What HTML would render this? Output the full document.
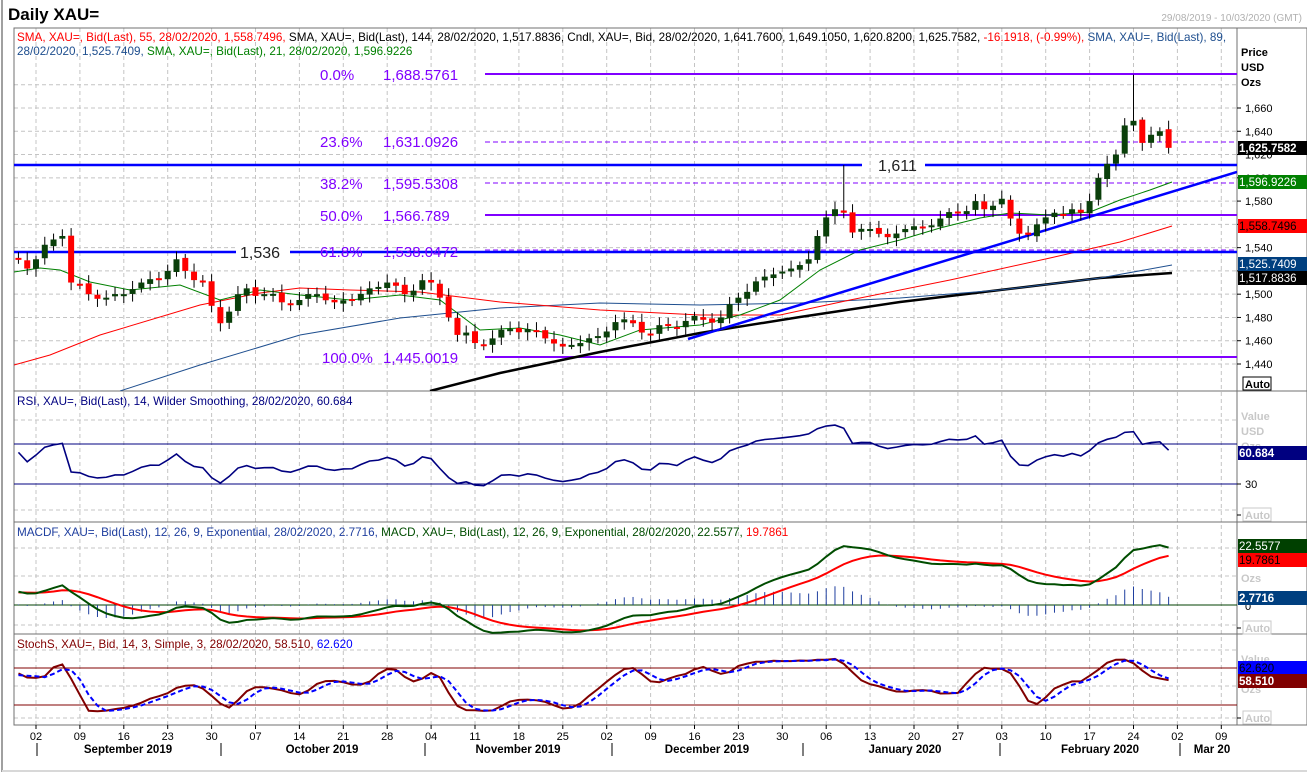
<!DOCTYPE html>
<html><head><meta charset="utf-8"><style>
html,body{margin:0;padding:0;background:#fff;width:1307px;height:775px;overflow:hidden}
svg{display:block;font-family:"Liberation Sans",Arial,sans-serif}
</style></head><body>
<svg id="s" width="1307" height="775" xmlns="http://www.w3.org/2000/svg">
<rect x="0" y="0" width="1307" height="775" fill="#fff"/>
<line x1="2" y1="0" x2="2" y2="772" stroke="#a0a0a0" stroke-width="2"/>
<line x1="2" y1="771" x2="1307" y2="771" stroke="#d8d8d8" stroke-width="2"/>
<text x="8" y="20" font-size="17" font-weight="bold" fill="#000">Daily XAU=</text>
<text x="1302" y="21" font-size="10" fill="#b0b0b0" text-anchor="end">29/08/2019 - 10/03/2020 (GMT)</text>
<g id="grid"></g>
<g id="plots"></g>
<g id="over"></g>
</svg>
<script>
const NS="http://www.w3.org/2000/svg";
const grid=document.getElementById('grid'),plots=document.getElementById('plots'),over=document.getElementById('over');
function el(p,t,a,txt){const e=document.createElementNS(NS,t);for(const k in a)e.setAttribute(k,a[k]);if(txt!=null)e.textContent=txt;p.appendChild(e);return e;}
const L=14,R=1237;
const panels=[[28,391],[391,522],[522,634],[634,725]];
const defs=el(document.getElementById('s'),'defs',{});
panels.forEach((p,i)=>{const c=el(defs,'clipPath',{id:'c'+i});el(c,'rect',{x:L,y:p[0],width:R-L,height:p[1]-p[0]});});
const wx=i=>36+43.9*i;
for(let i=0;i<28;i++){el(grid,'line',{x1:wx(i),y1:28,x2:wx(i),y2:725,stroke:'#c4c4c4','stroke-dasharray':'4,3'});}
const py=p=>108+(1660-p)*1.1636;
for(let p=1440;p<=1680;p+=20){el(grid,'line',{x1:L,y1:py(p),x2:R,y2:py(p),stroke:'#c4c4c4','stroke-dasharray':'4,3'});}
[420,444,484,510, 548,576,625, 650,686,718].forEach(y=>el(grid,'line',{x1:L,y1:y,x2:R,y2:y,stroke:'#c4c4c4','stroke-dasharray':'4,3'}));
el(grid,'rect',{x:L,y:28,width:1307-L,height:697,fill:'none',stroke:'#707070'});
[391,522,634].forEach(y=>el(grid,'line',{x1:L,y1:y,x2:1307,y2:y,stroke:'#707070'}));
el(grid,'line',{x1:R,y1:28,x2:R,y2:725,stroke:'#707070'});

const kp=[[-40,1500],[-20,1515],[-3,1530],[-2,1530],[-1,1522],[0,1530],[2,1547],[3,1550],[4,1510],[6,1500],[8,1497],[10,1500],[12,1510],[15,1520],[16,1530],[17,1520],[19,1510],[20,1490],[21,1475],[22,1485],[23,1500],[24,1505],[26,1500],[28,1493],[30,1495],[32,1500],[34,1493],[36,1495],[38,1505],[40,1510],[42,1500],[44,1512],[45,1510],[46,1497],[47,1480],[48,1465],[49,1467],[50,1458],[52,1462],[54,1470],[56,1470],[58,1462],[60,1455],[62,1458],[64,1464],[66,1476],[68,1475],[70,1466],[72,1473],[74,1477],[76,1478],[78,1480],[80,1497],[82,1511],[84,1517],[86,1522],[88,1530],[89,1550],[90,1566],[91,1573],[92,1570],[93,1553],[95,1556],[97,1549],[99,1556],[101,1558],[103,1565],[105,1570],[107,1580],[108,1573],[109,1576],[110,1582],[111,1565],[112,1552],[113,1551],[114,1560],[115,1566],[116,1570],[117,1568],[118,1573],[119,1570],[120,1580],[121,1600],[122,1612],[123,1620],[124,1645],[125,1649],[126,1630],[127,1637],[128,1640],[129,1625.76]];
const kpm={};kp.forEach(k=>kpm[k[0]]=k[1]);
function interp(d){for(let i=0;i<kp.length-1;i++){if(d>=kp[i][0]&&d<=kp[i+1][0]){const t=(d-kp[i][0])/(kp[i+1][0]-kp[i][0]);return kp[i][1]+t*(kp[i+1][1]-kp[i][1]);}}return kp[kp.length-1][1];}
const D=[];let prev=1498;
for(let d=-40;d<=129;d++){
 let c=(d in kpm)?kpm[d]:interp(d)+4*Math.sin(d*1.7);
 let o=prev+1.2*Math.sin(d*2.3);
 let h=Math.max(o,c)+3+4*Math.abs(Math.sin(d*1.3)),l=Math.min(o,c)-3-4*Math.abs(Math.cos(d*0.9));
 if(d==92)h=1611; if(d==125){o=1645;h=1688.6;l=1640;} if(d==126){o=1650;h=1652;} if(d==129){o=1641.76;h=1649.1;l=1620.8;}
 D.push({d,o,h,l,c});prev=c;
}
const xd=d=>36+8.78*d;
const g0=el(plots,'g',{'clip-path':'url(#c0)'});
const pur='#8000ff';
el(g0,'line',{x1:485,y1:74,x2:R,y2:74,stroke:pur,'stroke-width':2});
el(g0,'line',{x1:485,y1:142,x2:R,y2:142,stroke:pur,'stroke-dasharray':'5,3'});
el(g0,'line',{x1:485,y1:183,x2:R,y2:183,stroke:pur,'stroke-dasharray':'5,3'});
el(g0,'line',{x1:485,y1:215,x2:R,y2:215,stroke:pur,'stroke-width':2});
el(g0,'line',{x1:485,y1:250,x2:R,y2:250,stroke:pur,'stroke-dasharray':'5,3'});
el(g0,'line',{x1:485,y1:357,x2:R,y2:357,stroke:pur,'stroke-width':2});
function pl(g,pts,col,w,extra){const a={points:pts.map(p=>p.join(',')).join(' '),fill:'none',stroke:col,'stroke-width':w};Object.assign(a,extra||{});el(g,'polyline',a);}
pl(g0,[[430,391],[500,373],[600,352],[700,333],[800,317],[900,302],[1000,290],[1100,278],[1172,273]],'#000',2.5);
pl(g0,[[120,391],[200,365],[300,335],[400,318],[450,313],[500,308],[600,303],[700,305],[800,303],[900,298],[1000,290],[1100,278],[1172,265]],'#1f4f8f',1);
pl(g0,[[14,365],[50,355],[100,335],[200,305],[260,293],[300,288],[350,290],[420,292],[500,302],[600,310],[700,315],[780,315],[850,300],[950,280],[1050,258],[1120,242],[1172,226]],'#ff0000',1);
pl(g0,[[14,272],[40,268],[60,270],[90,282],[130,290],[180,285],[220,300],[260,290],[300,295],[350,300],[400,295],[440,300],[480,330],[520,328],[560,335],[600,345],[640,330],[700,325],[740,315],[780,300],[820,270],[860,250],[900,240],[940,228],[980,218],[1010,213],[1050,215],[1090,212],[1120,200],[1150,190],[1172,182]],'#008000',1);
el(g0,'line',{x1:L,y1:165,x2:862,y2:165,stroke:'#0000ff','stroke-width':2.5});
el(g0,'line',{x1:925,y1:165,x2:R,y2:165,stroke:'#0000ff','stroke-width':2.5});
el(g0,'line',{x1:L,y1:252,x2:R,y2:252,stroke:'#0000ff','stroke-width':2.5});
el(g0,'line',{x1:688,y1:339,x2:R,y2:172,stroke:'#0000ff','stroke-width':2.5});
D.filter(k=>k.d>=-2).forEach(k=>{const x=xd(k.d);el(g0,'line',{x1:x,y1:py(k.h),x2:x,y2:py(k.l),stroke:'#000','stroke-width':1});
 const up=k.c>=k.o;const y1=py(Math.max(k.o,k.c)),y2=py(Math.min(k.o,k.c));
 el(g0,'rect',{x:x-3,y:y1,width:6,height:Math.max(2,y2-y1),fill:up?'#0a3f0a':'#ff0000'});});
const ft={'font-size':15,fill:pur};
[[80,'0.0%','1,688.5761'],[147,'23.6%','1,631.0926'],[189,'38.2%','1,595.5308'],[221,'50.0%','1,566.789'],[257,'61.8%','1,538.0472'],[363,'100.0%','1,445.0019']].forEach(r=>{el(over,'text',Object.assign({x:r[1]=='100.0%'?322:320,y:r[0]},ft),r[1]);el(over,'text',Object.assign({x:383,y:r[0]},ft),r[2]);});
el(over,'rect',{x:236,y:243,width:54,height:18,fill:'#fff'});
el(over,'text',{x:240,y:258,'font-size':16,fill:'#222'},'1,536');
el(over,'text',{x:878,y:171,'font-size':16,fill:'#222'},'1,611');

const C=D.map(k=>k.c);
let ag=0,al=0;const rsi=[];for(let i=1;i<C.length;i++){const ch=C[i]-C[i-1];const gn=Math.max(ch,0),ls=Math.max(-ch,0);if(i<=14){ag+=gn/14;al+=ls/14;}else{ag=(ag*13+gn)/14;al=(al*13+ls)/14;}rsi[i]=100-100/(1+ag/(al||1e-6));}
const g1=el(plots,'g',{'clip-path':'url(#c1)'});
el(g1,'line',{x1:L,y1:444,x2:R,y2:444,stroke:'#000080'});el(g1,'line',{x1:L,y1:484,x2:R,y2:484,stroke:'#000080'});
pl(g1,D.map((k,i)=>[xd(k.d),514-(rsi[i]||50)]).filter((p,i)=>D[i].d>=-2),'#000080',1.6);
function ema(a,n){const k=2/(n+1);const o=[];a.forEach((v,i)=>o[i]=i?v*k+o[i-1]*(1-k):v);return o;}
const e12=ema(C,12),e26=ema(C,26),m=C.map((v,i)=>e12[i]-e26[i]),sg=ema(m,9);
const g2=el(plots,'g',{'clip-path':'url(#c2)'});
el(g2,'line',{x1:L,y1:605,x2:R,y2:605,stroke:'#004000'});
const my=v=>605-2.6*v;
D.forEach((k,i)=>{if(k.d<-2)return;const h=m[i]-sg[i];el(g2,'line',{x1:xd(k.d),y1:605,x2:xd(k.d),y2:my(h),stroke:'#1f3f9f','stroke-width':1});});
pl(g2,D.map((k,i)=>[xd(k.d),my(sg[i])]).filter((p,i)=>D[i].d>=-2),'#ff0000',2);
pl(g2,D.map((k,i)=>[xd(k.d),my(m[i])]).filter((p,i)=>D[i].d>=-2),'#004d00',2);
const raw=D.map((k,i)=>{const s=D.slice(Math.max(0,i-13),i+1);const hh=Math.max(...s.map(q=>q.h)),ll=Math.min(...s.map(q=>q.l));return (k.c-ll)/(hh-ll)*100;});
const sma=(a,n)=>a.map((v,i)=>{const s=a.slice(Math.max(0,i-n+1),i+1);return s.reduce((x,y)=>x+y,0)/s.length;});
const K=sma(raw,3),Dd=sma(K,3);
const g3=el(plots,'g',{'clip-path':'url(#c3)'});
el(g3,'line',{x1:L,y1:668,x2:R,y2:668,stroke:'#800000'});el(g3,'line',{x1:L,y1:705,x2:R,y2:705,stroke:'#800000'});
const sy=v=>717-0.617*v;
pl(g3,D.map((k,i)=>[xd(k.d),sy(K[i])]).filter((p,i)=>D[i].d>=-2),'#800000',2);
pl(g3,D.map((k,i)=>[xd(k.d),sy(Dd[i])]).filter((p,i)=>D[i].d>=-2),'#0000ff',2,{'stroke-dasharray':'5,3'});

function leg(y,parts){const t=el(over,'text',{x:17,y:y,'font-size':11.7});parts.forEach(p=>el(t,'tspan',{fill:p[0]},p[1]));}
leg(41,[['#ff0000','SMA, XAU=, Bid(Last),  55, 28/02/2020, 1,558.7496, '],['#000','SMA, XAU=, Bid(Last),  144, 28/02/2020, 1,517.8836, Cndl, XAU=, Bid, 28/02/2020, 1,641.7600, 1,649.1050, 1,620.8200, 1,625.7582, '],['#ff0000','-16.1918, (-0.99%), '],['#1f4f8f','SMA, XAU=, Bid(Last),  89,']]);
leg(55,[['#1f4f8f','28/02/2020, 1,525.7409, '],['#008000','SMA, XAU=, Bid(Last),  21, 28/02/2020, 1,596.9226']]);
leg(405,[['#000080','RSI, XAU=, Bid(Last),  14, Wilder Smoothing, 28/02/2020, 60.684']]);
leg(536,[['#1f3f9f','MACDF, XAU=, Bid(Last),  12, 26, 9, Exponential, 28/02/2020, 2.7716, '],['#004d00','MACD, XAU=, Bid(Last),  12, 26, 9, Exponential, 28/02/2020, 22.5577, '],['#ff0000','19.7861']]);
leg(648,[['#800000','StochS, XAU=, Bid,  14, 3, Simple,  3, 28/02/2020, 58.510, '],['#0000ff','62.620']]);

const ax={'font-size':11,fill:'#000'};
el(over,'text',{x:1241,y:56,'font-size':11,'font-weight':'bold'},'Price');
el(over,'text',{x:1241,y:71,'font-size':11,'font-weight':'bold'},'USD');
el(over,'text',{x:1241,y:86,'font-size':11,'font-weight':'bold'},'Ozs');
for(let p=1440;p<=1660;p+=20){const y=py(p);el(over,'line',{x1:R,y1:y,x2:R+4,y2:y,stroke:'#000'});el(over,'text',Object.assign({x:1245,y:y+4},ax),(p/1000|0)+','+String(p%1000).padStart(3,'0'));}
el(over,'rect',{x:1243,y:377,width:28,height:13,fill:'#fff',stroke:'#000'});
el(over,'text',{x:1245,y:388,'font-size':11,'font-weight':'bold'},'Auto');
function box(y,bg,fg,t,b){el(over,'rect',{x:R+1,y:y-7,width:1307-R-1,height:14,fill:bg});el(over,'text',{x:R+2,y:y+4,'font-size':11.5,fill:fg,'font-weight':b?'bold':'normal'},t);}
box(148,'#000','#fff','1,625.7582',1);
box(182,'#008000','#fff','1,596.9226');
box(226,'#ff0000','#000','1,558.7496');
box(264,'#003f7f','#fff','1,525.7409');
box(278,'#000','#fff','1,517.8836');
const gr={'font-size':11,fill:'#c8c8c8','font-weight':'bold'};
el(over,'text',Object.assign({x:1241,y:420},gr),'Value');el(over,'text',Object.assign({x:1241,y:435},gr),'USD');el(over,'text',Object.assign({x:1241,y:450},gr),'Ozs');
box(453,'#000080','#fff','60.684',1);
el(over,'line',{x1:R,y1:484,x2:R+4,y2:484,stroke:'#000'});el(over,'text',Object.assign({x:1245,y:488},ax),'30');
function auto(y){el(over,'line',{x1:R,y1:y,x2:R+4,y2:y,stroke:'#000'});el(over,'rect',{x:1243,y:y-7,width:28,height:13,fill:'#fff',stroke:'#c8c8c8'});el(over,'text',Object.assign({x:1245,y:y+4},gr),'Auto');}
auto(515);
box(546,'#004000','#fff','22.5577');
box(560,'#ff0000','#000','19.7861');
el(over,'text',Object.assign({x:1241,y:582},gr),'Ozs');
el(over,'text',Object.assign({x:1245,y:610},ax),'0');
box(598,'#003f7f','#fff','2.7716',1);
auto(628);
el(over,'text',Object.assign({x:1241,y:663},gr),'Value');
el(over,'text',Object.assign({x:1241,y:693},gr),'Ozs');
box(668,'#0000ff','#000','62.620');
box(681,'#800000','#fff','58.510',1);
auto(718);

const days=['02','09','16','23','30','07','14','21','28','04','11','18','25','02','09','16','23','30','06','13','20','27','03','10','17','24','02','09'];
days.forEach((d,i)=>{el(over,'line',{x1:wx(i),y1:725,x2:wx(i),y2:729,stroke:'#000'});el(over,'text',Object.assign({x:wx(i),y:740,'text-anchor':'middle'},ax),d);});
[37,221,425,612,803,1000,1180].forEach(x=>el(over,'line',{x1:x,y1:743,x2:x,y2:756,stroke:'#000'}));
[[128,'September 2019'],[322,'October 2019'],[518,'November 2019'],[707,'December 2019'],[905,'January 2020'],[1100,'February 2020'],[1212,'Mar 20']].forEach(m=>el(over,'text',{x:m[0],y:753,'font-size':11.5,'font-weight':'bold','text-anchor':'middle'},m[1]));
</script>
</body></html>
